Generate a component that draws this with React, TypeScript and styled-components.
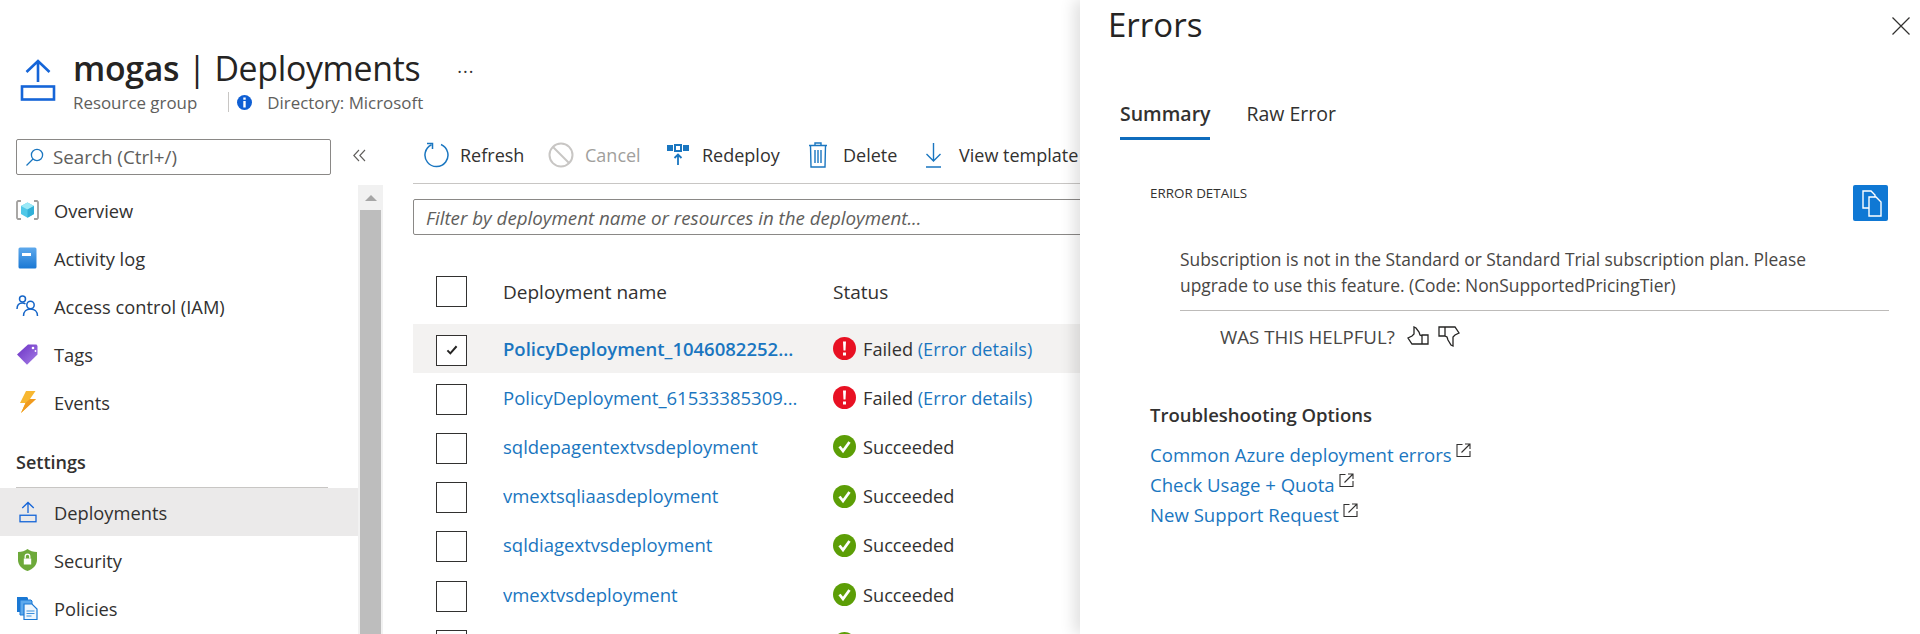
import React from "react";
import styled, { createGlobalStyle } from "styled-components";

const Global = createGlobalStyle`
  html, body { margin: 0; padding: 0; background: #fff; }
  body { font-family: "Open Sans", "Noto Sans", Arial, sans-serif; color: #323130; overflow: hidden; }
  * { box-sizing: border-box; }
`;

const Page = styled.div`
  width: 1920px; height: 634px; display: flex; overflow: hidden; background: #fff;
`;
const Blade = styled.div`
  width: 1080px; flex: none; overflow: hidden; display: flex; flex-direction: column;
`;
const Header = styled.header`
  height: 139px; flex: none; padding: 47px 0 0 20px; display: flex; align-items: flex-start;
`;
const HeaderIcon = styled.div`
  width: 36px; height: 42px; margin-top: 12px; margin-right: 17px; flex: none;
  svg { display: block; }
`;
const TitleBlock = styled.div`display: flex; flex-direction: column;`;
const TitleRow = styled.div`display: flex; align-items: baseline;`;
const Title = styled.h1`
  margin: 0; font-size: 33.8px; line-height: 42px; font-weight: 400; color: #252423; letter-spacing: -0.3px; white-space: nowrap;
  b { font-weight: 600; }
`;
const More = styled.span`
  margin-left: 37px; font-size: 18px; line-height: 20px; letter-spacing: 1px; color: #323130; position: relative; top: -3px;
`;
const SubRow = styled.div`
  display: flex; align-items: center; height: 22px; margin-top: 2px; font-size: 16.9px; color: #605e5c; white-space: nowrap;
`;
const SubDivider = styled.span`
  width: 1px; height: 20px; background: #c8c6c4; margin: 0 8px 0 31px;
`;
const InfoIcon = styled.span`
  display: inline-flex; margin-right: 15px; svg { display: block; }
`;
const Body = styled.div`flex: 1; display: flex; min-height: 0;`;
const Sidebar = styled.aside`
  width: 383px; flex: none; display: flex; flex-direction: column; min-height: 0;
`;
const SearchRow = styled.div`
  height: 46px; flex: none; display: flex; align-items: flex-start; padding-left: 16px;
`;
const SearchBox = styled.div`
  width: 315px; height: 36px; border: 1px solid #8a8886; border-radius: 2px; display: flex; align-items: center;
  padding-left: 8px; gap: 9px; font-size: 18.8px; color: #605e5c;
`;
const Collapse = styled.span`
  margin: 10px 0 0 22px; display: inline-flex;
`;
const SideScroll = styled.div`flex: 1; display: flex; min-height: 0;`;
const Nav = styled.nav`width: 358px; flex: none; padding-top: 1px;`;
const NavItem = styled.div<{ $active?: boolean }>`
  height: 48px; display: flex; align-items: center; padding-left: 16px; gap: 15px;
  background: ${(p) => (p.$active ? "#ebeaea" : "transparent")};
  font-size: 18.3px; color: #323130;
`;
const NavIcon = styled.span`
  width: 23px; height: 24px; flex: none; display: inline-flex; align-items: center; justify-content: center;
  svg { display: block; }
`;
const NavHeading = styled.div`
  height: 62px; margin: 0 30px 0 16px; padding-top: 23px; border-bottom: 1px solid #c8c6c4;
  font-size: 18px; line-height: 26px; font-weight: 600; color: #323130;
`;
const ScrollTrack = styled.div`
  width: 25px; flex: none; background: #f1f1f1; display: flex; flex-direction: column; align-items: center; padding: 0 2px;
`;
const ScrollArrow = styled.span`
  height: 25px; flex: none; display: flex; align-items: center; justify-content: center;
  &::before { content: ""; border: 6px solid transparent; border-top: none; border-left-width: 6px; border-right-width: 6px; border-bottom: 6px solid #a6a6a6; }
`;
const ScrollThumb = styled.div`width: 100%; flex: 1; background: #bdbdbd;`;

const Content = styled.main`
  flex: 1; min-width: 0; padding-left: 30px; overflow: hidden;
`;
const Toolbar = styled.div`
  height: 45px; padding-left: 11px; border-bottom: 1px solid #c8c6c4; display: flex; align-items: flex-start; white-space: nowrap;
`;
const ToolButton = styled.span<{ $disabled?: boolean; $w: number; $gap?: number }>`
  width: ${(p) => p.$w}px; flex: none; height: 32px; display: flex; align-items: center; gap: ${(p) => p.$gap ?? 11}px;
  font-size: 18px; color: ${(p) => (p.$disabled ? "#a19f9d" : "#323130")};
  svg { display: block; flex: none; }
`;
const FilterBox = styled.div`
  margin-top: 15px; height: 36px; width: 900px; border: 1px solid #8a8886; border-radius: 2px; display: flex; align-items: center;
  padding-left: 12px; font-style: italic; font-size: 18.75px; color: #605e5c; white-space: nowrap;
`;
const TableHead = styled.div`
  margin-top: 32px; height: 49px; margin-bottom: 8px; display: grid; grid-template-columns: 67px 330px 1fr; padding-left: 23px;
  align-items: center; font-size: 19px; color: #323130;
  span { font-weight: 500; }
`;
const Row = styled.div<{ $selected?: boolean }>`
  height: 49.2px; display: grid; grid-template-columns: 67px 330px 1fr; padding-left: 23px; align-items: center;
  background: ${(p) => (p.$selected ? "#f3f2f1" : "transparent")};
  font-size: 18.2px; white-space: nowrap;
`;
const Check = styled.span`
  width: 31px; height: 31px; border: 1px solid #323130; background: #fff; margin-top: 3px; display: flex; align-items: center; justify-content: center;
`;
const HeadCheck = styled(Check)`margin-top: 0;`;
const NameLink = styled.a<{ $bold?: boolean }>`
  color: #1a76c0; font-size: 18.5px; margin-top: -1px; font-weight: ${(p) => (p.$bold ? 600 : 400)}; overflow: hidden;
`;
const Status = styled.span`
  display: flex; align-items: center; gap: 7px; color: #323130;
  svg { display: block; flex: none; }
`;
const InlineLink = styled.a`color: #1a76c0;`;

const Panel = styled.section`
  width: 840px; flex: none; height: 634px; background: #fff; box-shadow: -6px 0 14px rgba(0,0,0,0.12); position: relative; z-index: 2;
  padding: 0 32px 0 30px; display: flex; flex-direction: column;
`;
const PanelHead = styled.div`
  height: 89px; flex: none; display: flex; justify-content: space-between; align-items: flex-start;
`;
const PanelTitle = styled.h2`
  margin: 2px 0 0 -2px; font-size: 33px; line-height: 46px; font-weight: 400; color: #252423;
`;
const CloseBtn = styled.span`
  margin: 17px -22px 0 0; display: inline-flex;
`;
const Tabs = styled.div`
  height: 51px; flex: none; display: flex; gap: 36px; padding-left: 10px;
`;
const Tab = styled.span<{ $active?: boolean }>`
  height: 51px; padding-top: 12px; font-size: 19.5px; line-height: 26px; font-weight: ${(p) => (p.$active ? 600 : 400)};
  color: #323130; border-bottom: 3px solid ${(p) => (p.$active ? "#0f6cbd" : "transparent")};
`;
const DetailsHead = styled.div`
  margin-top: 45px; height: 36px; padding-left: 40px; display: flex; justify-content: space-between; align-items: flex-start;
`;
const DetailsLabel = styled.span`
  font-size: 13.4px; line-height: 24px; color: #323130; margin-top: -4px;
`;
const CopyBtn = styled.span`
  width: 35px; height: 36px; background: #0f78d4; border-radius: 2px; display: flex; align-items: center; justify-content: center;
`;
const Message = styled.p`
  margin: 25px 0 0 70px; width: 709px; padding: 0 40px 12px 0; font-size: 17.4px; line-height: 26px; color: #484644; border-bottom: 1px solid #bdbbb9;
`;
const Helpful = styled.div`
  height: 50px; padding-left: 110px; display: flex; align-items: center; font-size: 18.7px; color: #484644;
  svg { display: block; }
`;
const HelpfulText = styled.span`margin-right: 12px;`;
const ThumbWrap = styled.span`margin-right: 9px; display: inline-flex;`;
const Trouble = styled.div`margin-top: 41px; padding-left: 40px;`;
const TroubleTitle = styled.div`
  font-size: 18.5px; line-height: 26px; font-weight: 600; color: #323130; margin-bottom: 11px;
`;
const TroubleLink = styled.div`
  height: 30px; display: flex; align-items: center; font-size: 18.6px; color: #1a76c0; gap: 4px;
  svg { display: block; margin-top: -8px; }
`;

const UploadIcon = ({ w, h, c = "#1565d8" }: { w: number; h: number; c?: string }) => (
  <svg width={w} height={h} viewBox="0 0 36 42" fill="none" stroke={c} strokeWidth="2.6">
    <path d="M18 23V2M6.5 13 18 2l11.5 11" />
    <rect x="2" y="27.5" width="32" height="13" />
  </svg>
);
const Ext = () => (
  <svg width="15" height="15" viewBox="0 0 15 15" fill="none" stroke="#323130" strokeWidth="1.1">
    <path d="M6.5 1.5H1v12h13V8" />
    <path d="M5.5 9.5 13.5 1.5M9 1h5v5" />
  </svg>
);
const Fail = () => (
  <svg width="23" height="23" viewBox="0 0 23 23">
    <circle cx="11.5" cy="11.5" r="11.5" fill="#e81123" />
    <path d="M10 4.5h3l-.5 9h-2zM10 15.5h3v3h-3z" fill="#fff" />
  </svg>
);
const Ok = () => (
  <svg width="23" height="23" viewBox="0 0 23 23">
    <circle cx="11.5" cy="11.5" r="11.5" fill="#5c9e06" />
    <path d="M6.5 11.5 10 16l6.5-9" fill="none" stroke="#fff" strokeWidth="2.8" />
  </svg>
);
const Tick = () => (
  <svg width="12" height="10" viewBox="0 0 14 12" fill="none" stroke="#252423" strokeWidth="2.4">
    <path d="M1.5 6.5 5 10l7.5-8.5" />
  </svg>
);

const rows = [
  { name: "PolicyDeployment_1046082252...", ok: false, bold: true, sel: true, label: true },
  { name: "PolicyDeployment_61533385309...", ok: false, label: true },
  { name: "sqldepagentextvsdeployment", ok: true, label: true },
  { name: "vmextsqliaasdeployment", ok: true, label: true },
  { name: "sqldiagextvsdeployment", ok: true, label: true },
  { name: "vmextvsdeployment", ok: true, label: true },
  { name: "", ok: true, label: false },
];

export default function App() {
  return (
    <Page>
      <Global />
      <Blade>
        <Header>
          <HeaderIcon><UploadIcon w={36} h={42} /></HeaderIcon>
          <TitleBlock>
            <TitleRow>
              <Title><b>mogas</b> | Deployments</Title>
              <More>···</More>
            </TitleRow>
            <SubRow>
              Resource group
              <SubDivider />
              <InfoIcon>
                <svg width="15" height="15" viewBox="0 0 15 15">
                  <circle cx="7.5" cy="7.5" r="7.5" fill="#0f5fd4" />
                  <path d="M6.3 2.6h2.4v2.2H6.3zM6.3 6h2.4v6.4H6.3z" fill="#fff" />
                </svg>
              </InfoIcon>
              Directory: Microsoft
            </SubRow>
          </TitleBlock>
        </Header>
        <Body>
          <Sidebar>
            <SearchRow>
              <SearchBox>
                <svg width="19" height="19" viewBox="0 0 19 19" fill="none" stroke="#1a76c0" strokeWidth="1.3">
                  <circle cx="12" cy="7" r="5.6" />
                  <path d="M8 11 1.5 17.5" />
                </svg>
                Search (Ctrl+/)
              </SearchBox>
              <Collapse>
                <svg width="13" height="13" viewBox="0 0 13 13" fill="none" stroke="#605e5c" strokeWidth="1.1">
                  <path d="M6 1 .8 6.5 6 12M12 1 6.8 6.5 12 12" />
                </svg>
              </Collapse>
            </SearchRow>
            <SideScroll>
              <Nav>
                <NavItem>
                  <NavIcon>
                    <svg width="23" height="20" viewBox="0 0 23 20">
                      <path d="M5 1H2L1 2v16l1 1h3M18 1h3l1 1v16l-1 1h-3" fill="none" stroke="#a19f9d" strokeWidth="1.8" />
                      <path d="M11.5 2.5 18 6v8l-6.5 3.8L5 14V6z" fill="#50c8e8" />
                      <path d="M11.5 2.5 18 6l-6.5 3.6L5 6z" fill="#9be9f7" />
                      <path d="M11.5 9.6V17.8L18 14V6z" fill="#32b0d8" />
                    </svg>
                  </NavIcon>
                  Overview
                </NavItem>
                <NavItem>
                  <NavIcon>
                    <svg width="19" height="22" viewBox="0 0 19 22">
                      <defs>
                        <linearGradient id="bk" x1="0" x2="0" y1="0" y2="1">
                          <stop offset="0" stopColor="#5ea9ec" />
                          <stop offset="1" stopColor="#1a78d4" />
                        </linearGradient>
                      </defs>
                      <rect x=".5" y=".5" width="18" height="21" rx="1.5" fill="url(#bk)" />
                      <rect x="4" y="6" width="9" height="3" fill="#fff" />
                    </svg>
                  </NavIcon>
                  Activity log
                </NavItem>
                <NavItem>
                  <NavIcon>
                    <svg width="23" height="22" viewBox="0 0 23 22" fill="none" stroke="#1565c8" strokeWidth="1.5">
                      <circle cx="6.5" cy="4" r="3" />
                      <path d="M1 14c0-4 2-6 5.5-6 1 0 2 .3 3 1" />
                      <circle cx="14.5" cy="10" r="3.7" />
                      <path d="M7.5 21c0-4.500 3-7 7-7s7 2.500 7 7" />
                    </svg>
                  </NavIcon>
                  Access control (IAM)
                </NavItem>
                <NavItem>
                  <NavIcon>
                    <svg width="21" height="21" viewBox="0 0 21 21">
                      <defs>
                        <linearGradient id="tg" x1="0" x2="1" y1="0" y2="1">
                          <stop offset="0" stopColor="#6a2fc4" />
                          <stop offset="1" stopColor="#a67fe6" />
                        </linearGradient>
                      </defs>
                      <path d="M0 10.500 11 .5h8.500l1 1.500v8.500L10 20.800z" fill="url(#tg)" />
                      <circle cx="16" cy="4" r="1.3" fill="#fff" />
                      <circle cx="18.500" cy="7" r=".9" fill="#fff" />
                    </svg>
                  </NavIcon>
                  Tags
                </NavItem>
                <NavItem>
                  <NavIcon>
                    <svg width="16" height="22" viewBox="0 0 16 22">
                      <path d="M6 0h9.500L10 8h6L1 22l4.500-10H0z" fill="#f7b731" />
                      <path d="M10 8h6L1 22l4.500-10z" fill="#f09a1f" />
                    </svg>
                  </NavIcon>
                  Events
                </NavItem>
                <NavHeading>Settings</NavHeading>
                <NavItem $active>
                  <NavIcon><UploadIcon w={18} h={22} c="#1565d8" /></NavIcon>
                  Deployments
                </NavItem>
                <NavItem>
                  <NavIcon>
                    <svg width="19" height="22" viewBox="0 0 19 22">
                      <path d="M9.500 0C12 2 15 3 19 3v8c0 5-4 9-9.500 11C4 20 0 16 0 11V3c4 0 7-1 9.500-3z" fill="#6da93a" />
                      <rect x="5.800" y="9.500" width="7.400" height="6" fill="#fff" />
                      <path d="M7.200 9.500V7.500a2.300 2.300 0 0 1 4.600 0v2" fill="none" stroke="#fff" strokeWidth="1.300" />
                    </svg>
                  </NavIcon>
                  Security
                </NavItem>
                <NavItem>
                  <NavIcon>
                    <svg width="21" height="23" viewBox="0 0 21 23">
                      <path d="M0 0h10l1 1v14H0z" fill="#1a78d4" />
                      <path d="M3 3h11l1 1v14H3z" fill="#5ea9ec" stroke="#1a78d4" />
                      <path d="M7 7h8l5 5v10.500H7z" fill="#eef6fd" stroke="#1a78d4" strokeWidth="1.200" />
                      <path d="M9.500 14h8M9.500 16.500h8M9.500 19h5" stroke="#3d8fdc" strokeWidth="1.200" />
                    </svg>
                  </NavIcon>
                  Policies
                </NavItem>
              </Nav>
              <ScrollTrack>
                <ScrollArrow />
                <ScrollThumb />
              </ScrollTrack>
            </SideScroll>
          </Sidebar>
          <Content>
            <Toolbar>
              <ToolButton $w={124} $gap={10}>
                <svg width="26" height="26" viewBox="0 0 26 26" fill="none" stroke="#1a76c0" strokeWidth="1.500">
                  <path d="M17 2.500a11.500 11.500 0 1 1-9.500.2" />
                  <path d="M3 1.500h5.500V7" />
                </svg>
                Refresh
              </ToolButton>
              <ToolButton $disabled $w={119}>
                <svg width="26" height="26" viewBox="0 0 26 26" fill="none" stroke="#c8c6c4" strokeWidth="2">
                  <circle cx="13" cy="13" r="11.500" />
                  <path d="M5 5l16 16" />
                </svg>
                Cancel
              </ToolButton>
              <ToolButton $w={141} $gap={13}>
                <svg width="22" height="22" viewBox="0 0 22 22">
                  <rect x="0" y="1" width="6" height="6" fill="#1a76c0" />
                  <rect x="8" y="1" width="6" height="6" fill="none" stroke="#1a76c0" strokeWidth="2" />
                  <rect x="16" y="1" width="6" height="6" fill="#1a76c0" />
                  <path d="M11 21V11M7.500 14 11 10.500l3.500 3.500" fill="none" stroke="#1a76c0" strokeWidth="1.800" />
                </svg>
                Redeploy
              </ToolButton>
              <ToolButton $w={117} $gap={15}>
                <svg width="20" height="26" viewBox="0 0 20 26" fill="none" stroke="#1a76c0" strokeWidth="1.400">
                  <path d="M7 3V1h6v2M1 3.500h18M2.500 3.500 3 25h14l.5-21.500" />
                  <path d="M7 8v13M10 8v13M13 8v13" />
                </svg>
                Delete
              </ToolButton>
              <ToolButton $w={200} $gap={17}>
                <svg width="17" height="26" viewBox="0 0 17 26" fill="none" stroke="#1a76c0" strokeWidth="1.400">
                  <path d="M8.500 1v18M1.500 12l7 7 7-7M1 25h15" />
                </svg>
                View template
              </ToolButton>
            </Toolbar>
            <FilterBox>Filter by deployment name or resources in the deployment...</FilterBox>
            <TableHead>
              <HeadCheck />
              <span>Deployment name</span>
              <span>Status</span>
            </TableHead>
            {rows.map((r, i) => (
              <Row key={i} $selected={r.sel}>
                <Check>{r.sel && <Tick />}</Check>
                <NameLink $bold={r.bold}>{r.name}</NameLink>
                <Status>
                  {r.ok ? <Ok /> : <Fail />}
                  {r.label && (r.ok ? "Succeeded" : <span>Failed <InlineLink>(Error details)</InlineLink></span>)}
                </Status>
              </Row>
            ))}
          </Content>
        </Body>
      </Blade>
      <Panel>
        <PanelHead>
          <PanelTitle>Errors</PanelTitle>
          <CloseBtn>
            <svg width="18" height="18" viewBox="0 0 18 18" fill="none" stroke="#323130" strokeWidth="1.200">
              <path d="M.5.5l17 17M17.500.5l-17 17" />
            </svg>
          </CloseBtn>
        </PanelHead>
        <Tabs>
          <Tab $active>Summary</Tab>
          <Tab>Raw Error</Tab>
        </Tabs>
        <DetailsHead>
          <DetailsLabel>ERROR DETAILS</DetailsLabel>
          <CopyBtn>
            <svg width="24" height="28" viewBox="0 0 24 28" fill="none" stroke="#fff" strokeWidth="1.400">
              <path d="M11 19H4V2h8l4 4v2" />
              <path d="M10 8h7l5 5v14H10z" fill="#0f78d4" />
            </svg>
          </CopyBtn>
        </DetailsHead>
        <Message>
          Subscription is not in the Standard or Standard Trial subscription plan. Please upgrade to use this feature. (Code: NonSupportedPricingTier)
        </Message>
        <Helpful>
          <HelpfulText>WAS THIS HELPFUL?</HelpfulText>
          <ThumbWrap>
            <svg width="22" height="20" viewBox="0 0 22 20" fill="none" stroke="#252423" strokeWidth="1.300">
              <path d="M15 18H5L1 12l4-2 2-2V1l2 1 3 4 1 3 2 1zM15 9h6v9h-6z" />
            </svg>
          </ThumbWrap>
          <ThumbWrap>
            <svg width="22" height="24" viewBox="0 0 22 24" fill="none" stroke="#252423" strokeWidth="1.300">
              <path d="M7 3h10l4 6-4 2-2 2v9l-2-1-3-5-1-3-2-1zM1 3h6v9H1z" />
            </svg>
          </ThumbWrap>
        </Helpful>
        <Trouble>
          <TroubleTitle>Troubleshooting Options</TroubleTitle>
          <TroubleLink>Common Azure deployment errors <Ext /></TroubleLink>
          <TroubleLink>Check Usage + Quota <Ext /></TroubleLink>
          <TroubleLink>New Support Request <Ext /></TroubleLink>
        </Trouble>
      </Panel>
    </Page>
  );
}
